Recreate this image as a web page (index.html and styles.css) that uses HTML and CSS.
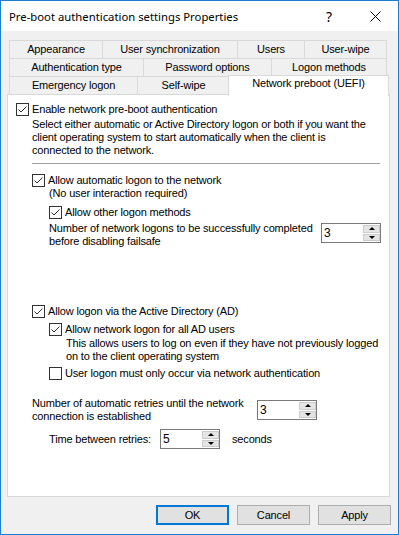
FILE: index.html
```html
<!DOCTYPE html>
<html lang="en">
<head>
  <meta charset="UTF-8">
  <title>Pre-boot authentication settings Properties</title>
  <link rel="stylesheet" href="styles.css">
</head>
<body>
  <div class="window">
    <!-- Title bar -->
    <div class="titlebar">
      <span class="title">Pre-boot authentication settings Properties</span>
      <span class="caption-btn help">?</span>
      <span class="caption-btn">
        <svg width="11" height="11" viewBox="0 0 11 11"><path d="M0.5 0.5 L10.5 10.5 M10.5 0.5 L0.5 10.5" stroke="#000" stroke-width="1" fill="none"/></svg>
      </span>
    </div>

    <div class="client">
      <!-- Tabs -->
      <div class="tabs">
        <div class="tab-row">
          <div class="tab t-appearance">Appearance</div>
          <div class="tab t-usersync">User synchronization</div>
          <div class="tab t-users">Users</div>
          <div class="tab t-userwipe">User-wipe</div>
        </div>
        <div class="tab-row">
          <div class="tab t-authtype">Authentication type</div>
          <div class="tab t-password">Password options</div>
          <div class="tab t-logon">Logon methods</div>
        </div>
        <div class="tab-row">
          <div class="tab t-emergency">Emergency logon</div>
          <div class="tab t-selfwipe">Self-wipe</div>
          <div class="tab t-network active">Network preboot (UEFI)</div>
        </div>
      </div>

      <!-- Tab page -->
      <div class="panel">
        <label class="check-row">
          <span class="cb checked"><svg width="11" height="11" viewBox="0 0 11 11"><path d="M1.5 5.5 L4 8 L9.5 2.5" stroke="#333" stroke-width="1" fill="none"/></svg></span>
          <span>Enable network pre-boot authentication</span>
        </label>
        <div class="desc intro indent-1 top-2">Select either automatic or Active Directory logon or both if you want the client operating system to start automatically when the client is connected to the network.</div>

        <div class="separator"></div>

        <label class="check-row indent-1 top-10">
          <span class="cb checked"><svg width="11" height="11" viewBox="0 0 11 11"><path d="M1.5 5.5 L4 8 L9.5 2.5" stroke="#333" stroke-width="1" fill="none"/></svg></span>
          <span>Allow automatic logon to the network</span>
        </label>
        <div class="desc indent-2">(No user interaction required)</div>

        <label class="check-row indent-2 top-6">
          <span class="cb checked"><svg width="11" height="11" viewBox="0 0 11 11"><path d="M1.5 5.5 L4 8 L9.5 2.5" stroke="#333" stroke-width="1" fill="none"/></svg></span>
          <span>Allow other logon methods</span>
        </label>
        <div class="field-row indent-2 top-3">
          <div class="field-label failsafe-label">Number of network logons to be successfully completed before disabling failsafe</div>
          <div class="spin spin-right">
            <span class="spin-value">3</span>
            <span class="spin-btns"><span class="spin-btn"><i class="arrow-up"></i></span><span class="spin-btn"><i class="arrow-down"></i></span></span>
          </div>
        </div>

        <label class="check-row indent-1 top-57">
          <span class="cb checked"><svg width="11" height="11" viewBox="0 0 11 11"><path d="M1.5 5.5 L4 8 L9.5 2.5" stroke="#333" stroke-width="1" fill="none"/></svg></span>
          <span>Allow logon via the Active Directory (AD)</span>
        </label>
        <label class="check-row indent-2 top-5">
          <span class="cb checked"><svg width="11" height="11" viewBox="0 0 11 11"><path d="M1.5 5.5 L4 8 L9.5 2.5" stroke="#333" stroke-width="1" fill="none"/></svg></span>
          <span>Allow network logon for all AD users</span>
        </label>
        <div class="desc indent-3 top-1">This allows users to log on even if they have not previously logged on to the client operating system</div>
        <label class="check-row indent-2 top-4">
          <span class="cb"></span>
          <span>User logon must only occur via network authentication</span>
        </label>

        <div class="field-row indent-1 top-17">
          <div class="field-label retries-label">Number of automatic retries until the network connection is established</div>
          <div class="spin spin-low">
            <span class="spin-value">3</span>
            <span class="spin-btns"><span class="spin-btn"><i class="arrow-up"></i></span><span class="spin-btn"><i class="arrow-down"></i></span></span>
          </div>
        </div>

        <div class="inline-row indent-2 top-6">
          <span class="time-label">Time between retries:</span>
          <div class="spin">
            <span class="spin-value">5</span>
            <span class="spin-btns"><span class="spin-btn"><i class="arrow-up"></i></span><span class="spin-btn"><i class="arrow-down"></i></span></span>
          </div>
          <span class="unit">seconds</span>
        </div>
      </div>

      <!-- Dialog buttons -->
      <div class="buttons">
        <button class="btn default">OK</button>
        <button class="btn">Cancel</button>
        <button class="btn">Apply</button>
      </div>
    </div>
  </div>
</body>
</html>
```

FILE: styles.css
```css
body {
  margin: 0;
  font-family: "Liberation Sans", Arial, sans-serif;
  font-size: 11px;
  letter-spacing: -0.16px;
  color: #000;
  background: #fff;
}

/* Window frame */
.window {
  width: 399px;
  height: 535px;
  box-sizing: border-box;
  border: 1px solid #1a7fd4;
  background: #f0f0f0;
  display: flex;
  flex-direction: column;
}

.titlebar {
  height: 30px;
  flex: none;
  background: #fff;
  display: flex;
  align-items: center;
  padding-left: 8px;
}

.title {
  flex: 1;
  font-family: "Noto Sans", "Open Sans", sans-serif;
  font-size: 11.3px;
  letter-spacing: 0;
}

.caption-btn {
  width: 46px;
  height: 30px;
  display: flex;
  align-items: center;
  justify-content: center;
}

.help {
  font-family: "Noto Sans", sans-serif;
  font-size: 14px;
  letter-spacing: 0;
}

.client {
  flex: 1;
  padding: 9px 8px 0 6px;
}

/* Tabs */
.tabs {
  padding-left: 2px;
}

.tab-row {
  display: flex;
  height: 19px;
}

.tab-row + .tab-row {
  margin-top: -1px;
}

.tab {
  box-sizing: border-box;
  height: 19px;
  line-height: 17px;
  border: 1px solid #d9d9d9;
  background: #f0f0f0;
  text-align: center;
  white-space: nowrap;
}

.tab + .tab {
  border-left: none;
}

.t-appearance { width: 94px; }
.t-usersync { width: 135px; }
.t-users { width: 67px; }
.t-userwipe { width: 82px; }
.t-authtype { width: 135px; }
.t-password { width: 128px; }
.t-logon { width: 115px; }
.t-emergency { width: 129px; }
.t-selfwipe { width: 92px; }
.t-network { width: 161px; }

.tab.active {
  position: relative;
  z-index: 1;
  height: 21px;
  margin: -1px -2px 0 -2px;
  border-left: 1px solid #d9d9d9;
  border-bottom: none;
  background: #fff;
  line-height: 13px;
  padding-top: 1px;
}

/* Tab page */
.panel {
  position: relative;
  margin-top: -1px;
  width: 383px;
  height: 403px;
  box-sizing: border-box;
  border: 1px solid #d9d9d9;
  background: #fff;
  padding: 8px;
}

.check-row {
  display: flex;
  align-items: center;
  gap: 3px;
  height: 13px;
  line-height: 13px;
}

.cb {
  width: 13px;
  height: 13px;
  box-sizing: border-box;
  border: 1px solid #333;
  background: #fff;
  flex: none;
  display: flex;
}

.desc {
  line-height: 13px;
}

.intro {
  width: 338px;
}

.indent-1 { margin-left: 16px; }
.indent-2 { margin-left: 33px; }
.indent-3 { margin-left: 50px; }

.top-1 { margin-top: 1px; }
.top-2 { margin-top: 2px; }
.top-3 { margin-top: 3px; }
.top-4 { margin-top: 4px; }
.top-5 { margin-top: 5px; }
.top-6 { margin-top: 6px; }
.top-10 { margin-top: 10px; }
.top-17 { margin-top: 17px; }
.top-57 { margin-top: 57px; }

.separator {
  margin: 6px 1px 0 16px;
  height: 1px;
  background: #a0a0a0;
}

.field-row {
  display: flex;
  align-items: flex-start;
}

.field-label {
  line-height: 13px;
}

.failsafe-label {
  width: 273px;
}

.retries-label {
  width: 225px;
}

.spin-right {
  margin-left: auto;
  margin-top: 1px;
}

.spin-low {
  margin-top: 3px;
}

.inline-row {
  display: flex;
  align-items: center;
  height: 20px;
}

.time-label {
  width: 111px;
}

.unit {
  margin-left: 12px;
}

/* Spin control */
.spin {
  width: 60px;
  height: 20px;
  box-sizing: border-box;
  border: 1px solid #7a7a7a;
  background: #fff;
  display: flex;
  flex: none;
}

.spin-value {
  flex: 1;
  padding-left: 2px;
  font-size: 12px;
  line-height: 18px;
}

.spin-btns {
  width: 17px;
  display: flex;
  flex-direction: column;
  gap: 1px;
  padding: 1px 0 1px 0;
}

.spin-btn {
  flex: 1;
  box-sizing: border-box;
  background: #e5e5e5;
  border: 1px solid #cccccc;
  display: flex;
  align-items: center;
  justify-content: center;
}

.arrow-up {
  width: 0;
  height: 0;
  border-left: 3px solid transparent;
  border-right: 3px solid transparent;
  border-bottom: 3px solid #000;
}

.arrow-down {
  width: 0;
  height: 0;
  border-left: 3px solid transparent;
  border-right: 3px solid transparent;
  border-top: 3px solid #000;
}

/* Dialog buttons */
.buttons {
  display: flex;
  justify-content: flex-end;
  gap: 8px;
  margin-top: 8px;
  margin-right: -1px;
}

.btn {
  width: 73px;
  height: 20px;
  box-sizing: border-box;
  border: 1px solid #adadad;
  background: #e1e1e1;
  font-family: "Liberation Sans", Arial, sans-serif;
  font-size: 11px;
  letter-spacing: -0.16px;
  color: #000;
  padding: 0;
}

.btn.default {
  border: 2px solid #0078d7;
}
```
